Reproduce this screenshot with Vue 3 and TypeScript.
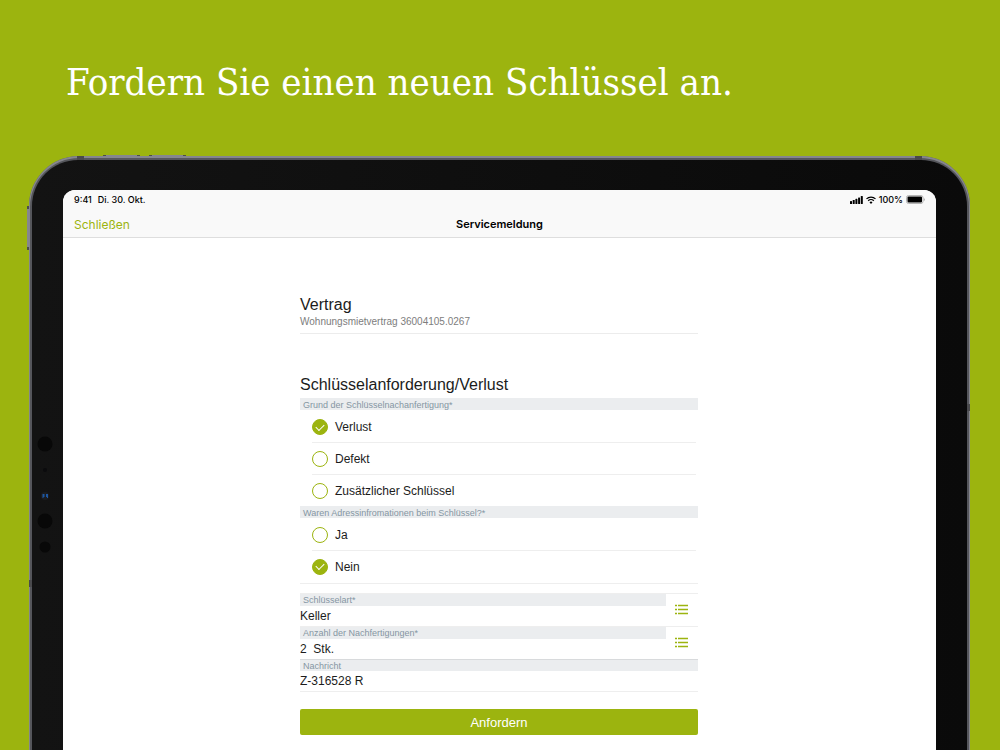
<script setup lang="ts">
import { ref } from 'vue'

interface RadioGroup {
  name: string
  legend: string
  options: string[]
}

interface TextField {
  id: string
  label: string
  list: boolean
}

const groups: RadioGroup[] = [
  {
    name: 'grund',
    legend: 'Grund der Schlüsselnachanfertigung*',
    options: ['Verlust', 'Defekt', 'Zusätzlicher Schlüssel'],
  },
  {
    name: 'adresse',
    legend: 'Waren Adressinfromationen beim Schlüssel?*',
    options: ['Ja', 'Nein'],
  },
]

const fields: TextField[] = [
  { id: 'art', label: 'Schlüsselart*', list: true },
  { id: 'anzahl', label: 'Anzahl der Nachfertigungen*', list: true },
  { id: 'nachricht', label: 'Nachricht', list: false },
]

const selected = ref<Record<string, string>>({ grund: 'Verlust', adresse: 'Nein' })
const values = ref<Record<string, string>>({
  art: 'Keller',
  anzahl: '2  Stk.',
  nachricht: 'Z-316528 R',
})
</script>

<template>
  <main class="stage">
    <h1 class="headline">Fordern Sie einen neuen Schlüssel an.</h1>

    <div class="device">
      <span class="key key-up"></span>
      <span class="key key-down"></span>
      <span class="key key-side"></span>
      <span class="seam seam-top-left"></span>
      <span class="seam seam-top-right"></span>
      <span class="seam seam-left"></span>
      <span class="seam seam-right"></span>

      <div class="bezel">
        <svg class="sensors" width="16" height="120" viewBox="0 0 16 120" aria-hidden="true">
          <circle cx="8" cy="9" r="7.5" fill="#080808" />
          <circle cx="8" cy="35" r="2" fill="#0b0b0d" />
          <circle cx="8" cy="61" r="4" fill="#1b1c20" />
          <path d="M5.5 59h2v3h-1v1h-1zM9 59h2v4h-1v-1H9z" fill="#1d56a0" />
          <circle cx="8" cy="86" r="7.5" fill="#080808" />
          <circle cx="8" cy="112" r="5.5" fill="#080808" />
        </svg>

        <div class="screen">
          <header class="top">
            <div class="status">
              <span class="time">9:41</span>
              <span>Di. 30. Okt.</span>
              <span class="indicators">
                <svg width="13" height="8" viewBox="0 0 13 8" aria-hidden="true">
                  <rect x="0" y="5" width="2" height="3" rx=".6" />
                  <rect x="2.7" y="4" width="2" height="4" rx=".6" />
                  <rect x="5.4" y="2.8" width="2" height="5.2" rx=".6" />
                  <rect x="8.1" y="1.5" width="2" height="6.5" rx=".6" />
                  <rect x="10.8" y="0" width="2" height="8" rx=".6" />
                </svg>
                <svg width="10" height="8" viewBox="0 0 10 8" aria-hidden="true">
                  <path d="M.5 2.9a6.5 6.5 0 0 1 9 0M2.2 4.8a4 4 0 0 1 5.600 0" fill="none" stroke="#000" stroke-width="1.3" />
                  <path d="M3.5 6.2a2.2 2.2 0 0 1 3 0L5 7.9z" />
                </svg>
                <span>100%</span>
                <svg width="19" height="9" viewBox="0 0 19 9" aria-hidden="true">
                  <rect x=".5" y=".5" width="16.5" height="8" rx="2" fill="none" stroke="#b5b5b5" />
                  <rect x="1.5" y="1.5" width="14.5" height="6" rx="1" />
                  <path d="M17.8 3v3q1-.5 1-1.500t-1-1.500z" fill="#a5a5a5" />
                </svg>
              </span>
            </div>
            <nav class="bar">
              <button type="button" class="close">Schließen</button>
              <h2 class="title">Servicemeldung</h2>
            </nav>
          </header>

          <form class="form" @submit.prevent>
            <section class="contract">
              <h3>Vertrag</h3>
              <p>Wohnungsmietvertrag 36004105.0267</p>
            </section>

            <h3 class="request">Schlüsselanforderung/Verlust</h3>

            <fieldset v-for="g in groups" :key="g.name" class="group">
              <legend class="strip">{{ g.legend }}</legend>
              <label v-for="o in g.options" :key="o" class="option">
                <input v-model="selected[g.name]" type="radio" :name="g.name" :value="o" />
                <span>{{ o }}</span>
              </label>
            </fieldset>

            <div class="fields">
              <div v-for="f in fields" :key="f.id" class="field" :class="{ plain: !f.list }">
                <div class="entry">
                  <label class="strip" :for="f.id">{{ f.label }}</label>
                  <input :id="f.id" v-model="values[f.id]" type="text" />
                </div>
                <button v-if="f.list" type="button" class="pick" :aria-label="f.label + ' auswählen'">
                  <svg width="14" height="12" viewBox="0 0 14 12" aria-hidden="true">
                    <path d="M0 1.5h2M3 1.5h10M0 5.5h2M3 5.5h10M0 9.5h2M3 9.5h10" stroke="#9cb40f" stroke-width="1.6" />
                  </svg>
                </button>
              </div>
            </div>

            <button type="submit" class="submit">Anfordern</button>
          </form>
        </div>
      </div>
    </div>
  </main>
</template>

<style>
body {
  margin: 0;
  background: #9cb40f;
}
</style>

<style scoped>
* {
  box-sizing: border-box;
}

.stage {
  display: flex;
  flex-direction: column;
  height: 100vh;
  overflow: hidden;
  background: #9cb40f;
  color: #1c1c1c;
  font-family: "Liberation Sans", Arial, sans-serif;
}

h1,
h2,
h3,
p {
  margin: 0;
  font-weight: 400;
}

button {
  padding: 0;
  border: 0;
  background: none;
  font-family: inherit;
  cursor: pointer;
}

.headline {
  padding: 58px 66px 50px;
  color: #fff;
  font-family: "DejaVu Serif Condensed", "DejaVu Serif", serif;
  font-size: 38px;
  line-height: 48px;
  white-space: nowrap;
}

.device {
  position: relative;
  display: flex;
  flex: 1;
  margin: 0 30px 0 29px;
  padding: 4px 3px 0;
  border-radius: 50px 50px 0 0;
  background: #55565b;
  box-shadow: inset 0 1px 0 1px #85868d;
}

.key {
  position: absolute;
  background: #85868f;
  border: solid #4c4e4a;
}

.key-up,
.key-down {
  top: -1px;
  width: 37px;
  height: 1px;
  border-width: 0 3px;
}

.key-up {
  left: 74px;
}

.key-down {
  left: 120px;
}

.key-side {
  top: 50px;
  left: -2px;
  width: 2px;
  height: 44px;
  border-width: 3px 0;
}

.seam {
  position: absolute;
  background: #4a4a4d;
}

.seam-top-left,
.seam-top-right {
  top: 0;
  width: 7px;
  height: 4px;
}

.seam-top-left {
  left: 48px;
}

.seam-top-right {
  right: 48px;
}

.seam-left,
.seam-right {
  width: 3px;
  height: 7px;
}

.seam-left {
  top: 424px;
  left: 0;
}

.seam-right {
  top: 248px;
  right: 0;
}

.bezel {
  position: relative;
  display: flex;
  flex: 1;
  min-width: 0;
  padding: 30px 31px 0;
  border-radius: 46px 46px 0 0;
  background: linear-gradient(90deg, #131313, #0a0a0a);
}

.sensors {
  position: absolute;
  top: 275px;
  left: 5px;
}

.screen {
  flex: 1;
  min-width: 0;
  overflow: hidden;
  border-radius: 12px 12px 0 0;
  background: #fff;
}

.top {
  height: 48px;
  border-bottom: 1px solid #dedede;
  background: #f9f9f9;
}

.status {
  display: flex;
  align-items: center;
  height: 19px;
  padding: 0 11px;
  color: #000;
  font-family: Inter, "Liberation Sans", sans-serif;
  font-size: 9px;
  font-weight: 500;
}

.time {
  margin-right: 6px;
}

.indicators {
  display: flex;
  align-items: center;
  gap: 3px;
  margin-left: auto;
}

.bar {
  display: grid;
  grid-template-columns: 1fr auto 1fr;
  align-items: center;
  height: 30px;
  padding: 0 11px;
}

.close {
  justify-self: start;
  color: #9cb40f;
  font-family: Inter, "Liberation Sans", sans-serif;
  font-size: 12px;
}

.title {
  color: #000;
  font-family: Inter, "Liberation Sans", sans-serif;
  font-size: 11px;
  font-weight: 600;
}

.form {
  width: 399px;
  max-width: 100%;
  margin: 0 auto;
  padding: 56px 1px 16px 0;
}

.form h3 {
  font-size: 16px;
  line-height: 22px;
}

.contract {
  margin-bottom: 40px;
  padding-bottom: 5px;
  border-bottom: 1px solid #ececec;
}

.contract p {
  color: #7d7d7d;
  font-size: 10px;
  line-height: 12px;
}

.form .request {
  margin-bottom: 2px;
}

.strip {
  display: block;
  width: 100%;
  height: 12px;
  padding: 0 3px;
  background: #ebedef;
  color: #8596a3;
  font-size: 9px;
  line-height: 13px;
}

.group {
  min-width: 0;
  margin: 0;
  padding: 0;
  border: 0;
}

.group .strip {
  line-height: 14px;
}

.group:last-of-type {
  padding-bottom: 1px;
  border-bottom: 1px solid #eee;
}

.option {
  display: flex;
  align-items: center;
  gap: 7px;
  height: 32px;
  margin: 0 2px 0 12px;
  border-bottom: 1px solid #eee;
  font-size: 12px;
}

.strip + .option {
  height: 33px;
  padding-top: 2px;
}

.option:last-child {
  height: 31px;
  border-bottom: 0;
}

.option input {
  display: grid;
  place-items: center;
  width: 16px;
  height: 16px;
  margin: 0;
  border: 1px solid #9cb40f;
  border-radius: 50%;
  appearance: none;
}

.option input:checked {
  background: #9cb40f;
}

.option input:checked::after {
  content: "";
  width: 7px;
  height: 4px;
  margin-bottom: 2px;
  border: solid #fff;
  border-width: 0 0 1px 1px;
  transform: rotate(-45deg);
}

.fields {
  margin-top: 9px;
}

.field {
  display: flex;
  border-top: 1px solid #eee;
}

.entry {
  flex: 1;
  min-width: 0;
}

.entry input {
  display: block;
  width: 100%;
  height: 20px;
  padding: 0;
  border: 0;
  outline: 0;
  background: none;
  color: #1c1c1c;
  font-family: inherit;
  font-size: 12px;
}

.plain {
  border-top-color: #d8dadc;
  border-bottom: 1px solid #eee;
}

.plain .strip {
  height: 11px;
  line-height: 12px;
}

.pick {
  display: grid;
  place-items: center;
  width: 32px;
}

.submit {
  display: block;
  width: 100%;
  height: 26px;
  margin-top: 17px;
  border-radius: 2px;
  background: #9cb40f;
  color: #fff;
  font-size: 13px;
}
</style>
